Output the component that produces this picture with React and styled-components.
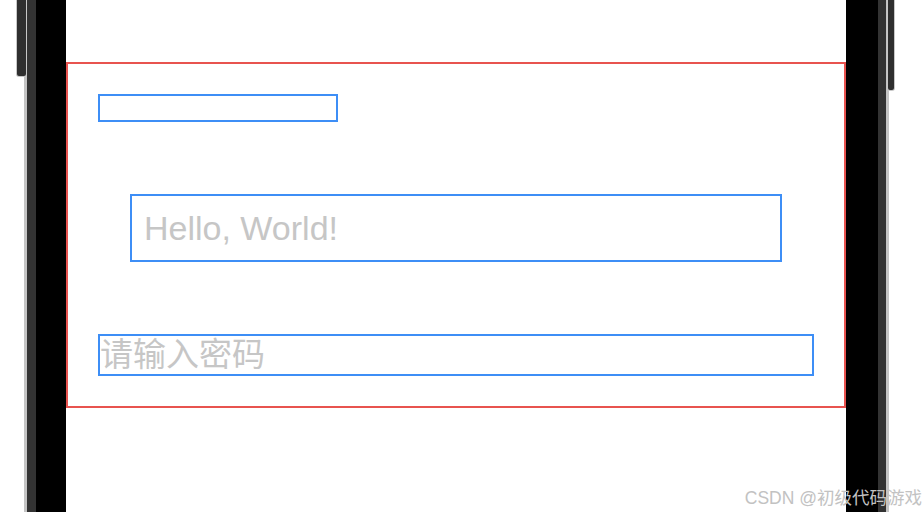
import React from "react";
import styled, { createGlobalStyle } from "styled-components";

const Global = createGlobalStyle`
  html, body { margin: 0; padding: 0; background: #fff; overflow: hidden; }
  body { font-family: "Liberation Sans", Arial, sans-serif; }
`;

const Page = styled.div`
  position: relative;
  display: flex;
  flex-direction: row;
  width: 922px;
  height: 512px;
  background: #fff;
  overflow: hidden;
`;

const Gutter = styled.div`
  width: ${(p) => p.$w}px;
  flex: ${(p) => (p.$grow ? 1 : "none")};
  height: 100%;
`;

const Strip = styled.div`
  flex: none;
  width: ${(p) => p.$w}px;
  height: 100%;
  background: ${(p) => p.$c};
`;

const SideButton = styled.div`
  position: absolute;
  top: 0;
  left: ${(p) => p.$x}px;
  width: ${(p) => p.$w}px;
  height: ${(p) => p.$h}px;
  background: #2f2f2f;
  border-radius: 0 0 2px 2px;
  box-shadow: 0 0 0 1px #c8c8c8;
`;

const Screen = styled.div`
  flex: none;
  width: 780px;
  height: 100%;
  padding-top: 62px;
  box-sizing: border-box;
  background: #fff;
`;

const Frame = styled.div`
  box-sizing: border-box;
  border: 2px solid #e8534f;
  padding: 30px;
  display: flex;
  flex-direction: column;
  align-items: flex-start;
  gap: 72px;
`;

const Field = styled.input`
  box-sizing: border-box;
  border: 2px solid #3d8ef6;
  border-radius: 0;
  outline: none;
  background: #fff;
  margin: 0;
  color: #333;
  width: ${(p) => p.$width};
  height: ${(p) => p.$height}px;
  padding: ${(p) => p.$pad};
  align-self: ${(p) => (p.$inset ? "stretch" : "flex-start")};
  margin-left: ${(p) => (p.$inset ? "32px" : "0")};
  margin-right: ${(p) => (p.$inset ? "32px" : "0")};
  font-size: ${(p) => p.$size}px;
  font-family: "Liberation Sans", "Noto Sans CJK SC", Arial, sans-serif;
  &::placeholder {
    color: #c6c6c6;
    opacity: 1;
  }
`;

const Watermark = styled.div`
  position: absolute;
  right: 0;
  bottom: 4px;
  font-family: "Liberation Sans", "Noto Sans CJK SC", sans-serif;
  font-size: 17.5px;
  line-height: 20px;
  color: #c2c2c2;
  white-space: nowrap;
`;

export default function App() {
  return (
    <>
      <Global />
      <Page>
        <Gutter $w={24} />
        <Strip $w={3} $c="#c4c4c4" />
        <Strip $w={9} $c="#333333" />
        <Strip $w={30} $c="#000000" />
        <Screen>
          <Frame>
            <Field $width="240px" $height={28} $pad="0 6px" $size={14} />
            <Field
              $inset
              $width="auto"
              $height={68}
              $pad="0 12px"
              $size={34}
              placeholder="Hello, World!"
            />
            <Field
              $inset={false}
              $width="100%"
              $height={42}
              $pad="0"
              $size={33}
              placeholder="请输入密码"
            />
          </Frame>
        </Screen>
        <Strip $w={32} $c="#000000" />
        <Strip $w={8} $c="#333333" />
        <Strip $w={3} $c="#c4c4c4" />
        <Gutter $grow />
        <SideButton $x={17} $w={9} $h={76} />
        <SideButton $x={888} $w={6} $h={90} />
        <Watermark>CSDN @初级代码游戏</Watermark>
      </Page>
    </>
  );
}
